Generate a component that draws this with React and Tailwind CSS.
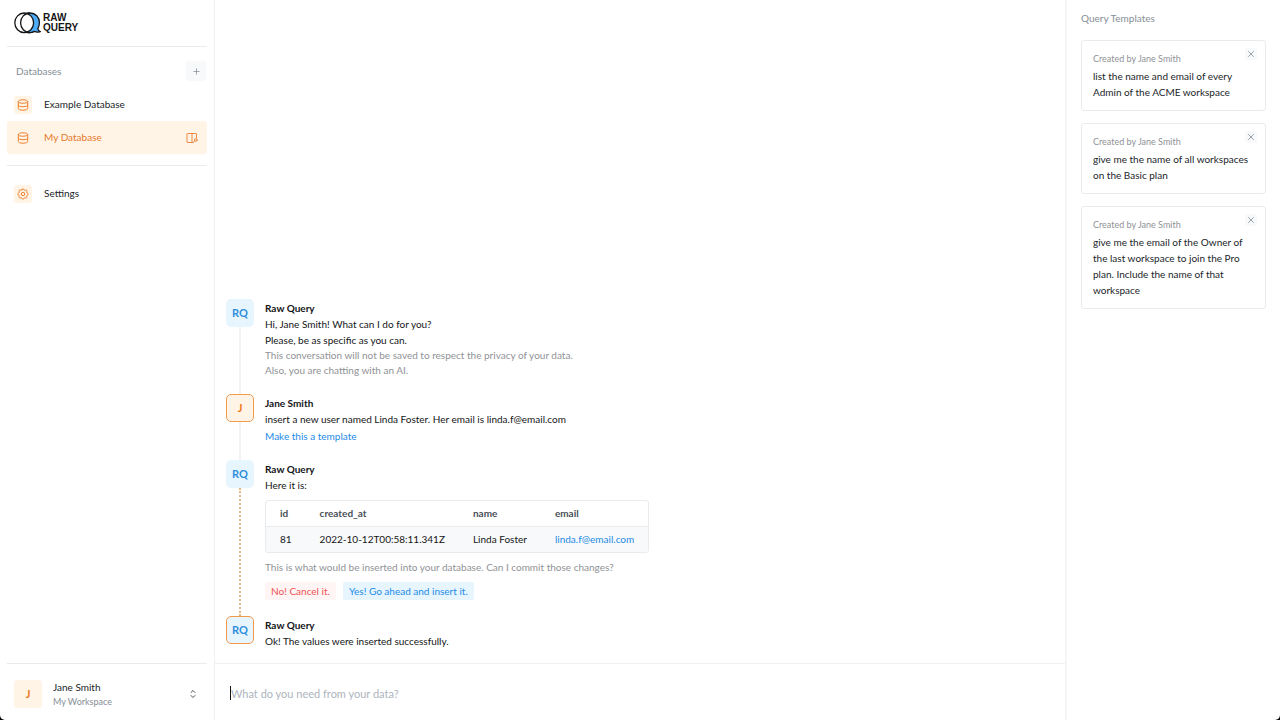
import React from "react";
import { TbDatabase, TbSettings, TbPlus, TbX, TbSelector } from "react-icons/tb";

function Logo() {
  return (
    <div className="flex items-center gap-0.5">
      <svg width="27" height="22" viewBox="0 0 27 22" fill="none" stroke="#141517" strokeWidth="1.3" aria-hidden="true">
        <path d="M16 1C21.5 1 25.4 5.2 25.4 10.6C25.4 13 24.7 15.2 23.8 16.6C24 18 24.8 19 26.2 19.6C24 20.3 22 20.2 20.4 19.4C19 20.3 17.5 20.6 16 20.6C10.6 20.6 6.6 16.2 6.6 10.8C6.6 5.4 10.6 1 16 1Z" fill="#4dabf7" />
        <ellipse cx="10.2" cy="10.8" rx="9.4" ry="9.8" fill="#ffffff" />
        <path d="M16 1C10.6 1 6.6 5.4 6.6 10.8C6.6 16.2 10.6 20.6 16 20.6" />
      </svg>
      <span className="font-['Liberation_Sans',sans-serif] text-[10px] leading-[10px] font-bold text-[#141517]">
        RAW
        <br />
        QUERY
      </span>
    </div>
  );
}

function SchemaIcon() {
  return (
    <svg width="12" height="12" viewBox="0 0 24 24" fill="none" stroke="currentColor" strokeWidth="1.7" strokeLinecap="round" strokeLinejoin="round" aria-hidden="true">
      <path d="M14 21H3a1 1 0 0 1-1-1V4a1 1 0 0 1 1-1h17a1 1 0 0 1 1 1v8M12 3v18" />
      <circle cx="19.5" cy="16" r="2.6" />
      <path d="M17.6 17.9L14.5 21" />
    </svg>
  );
}

function NavItem({ icon: Icon, label, active }) {
  return (
    <div className={active ? "flex h-[33px] items-center rounded-[3px] bg-[#fff4e6] text-[#e8792b]" : "flex h-[33px] items-center text-[#212529]"}>
      <a href="#" className="flex flex-1 items-center gap-3 pl-[7px]">
        <span className="flex size-[18px] items-center justify-center rounded-[3px] bg-[#fff4e6] text-[#ee8232]">
          <Icon size={14} strokeWidth={1.7} />
        </span>
        {label}
      </a>
      {active && (
        <button type="button" aria-label="Show schema" className="mr-[9px]">
          <SchemaIcon />
        </button>
      )}
    </div>
  );
}

function Sidebar() {
  return (
    <aside className="flex w-[215px] shrink-0 flex-col border-r border-[#eef0f2] px-[7px]">
      <div className="flex h-[46px] items-center pl-[7px]">
        <Logo />
      </div>
      <section className="border-t border-[#e9ecef] pt-[14px] pb-[11px]">
        <div className="mb-[7px] flex h-5 items-center justify-between pr-px pl-[9px] text-[#868e96]">
          <h2>Databases</h2>
          <button type="button" aria-label="Add database" className="flex size-5 items-center justify-center rounded-[3px] bg-[#f8f9fa]">
            <TbPlus size={9} />
          </button>
        </div>
        <NavItem icon={TbDatabase} label="Example Database" />
        <NavItem icon={TbDatabase} label="My Database" active />
      </section>
      <section className="border-t border-[#e9ecef] pt-[11px]">
        <NavItem icon={TbSettings} label="Settings" />
      </section>
      <button type="button" className="mt-auto flex h-[57px] items-center border-t border-[#e9ecef] pt-1 pr-2 pl-[7px] text-left">
        <span className="flex size-7 items-center justify-center rounded-[4px] bg-[#fff4e6] text-[11px] font-bold text-[#ee7a20]">J</span>
        <span className="ml-[11px] flex-1">
          <span className="block leading-[15px] text-[#212529]">Jane Smith</span>
          <span className="block text-[9px] leading-[14px] text-[#868e96]">My Workspace</span>
        </span>
        <TbSelector size={12} className="text-[#495057]" />
      </button>
    </aside>
  );
}

const avatarStyles = {
  bot: "bg-[#e7f5ff] text-[#2f8edb]",
  user: "border border-[#f2994a] bg-[#fff4e6] text-[#ee7a20]",
  current: "border border-[#f2994a] bg-[#e7f5ff] text-[#2f8edb]",
};

const lineStyles = {
  plain: "w-0 flex-1 border-l-2 border-[#f1f3f5]",
  dotted: "w-0 flex-1 border-l-2 border-dotted border-[#e3b98a]",
};

function Message({ avatar, kind, line, name, children }) {
  return (
    <li className="flex gap-[11px]">
      <div className="flex w-7 flex-col items-center">
        <span className={"flex size-7 shrink-0 items-center justify-center rounded-[5px] text-[11px] font-bold " + avatarStyles[kind]}>{avatar}</span>
        {line && <span className={lineStyles[line]} />}
      </div>
      <div className={line ? "pt-[2px] pb-4" : "pt-[2px]"}>
        <h3 className="leading-[15px] font-bold">{name}</h3>
        {children}
      </div>
    </li>
  );
}

function Chat() {
  return (
    <main className="flex min-w-0 flex-1 flex-col">
      <ol className="flex flex-1 flex-col justify-end px-[11px] pb-[14px] leading-[16px] text-[#141517]">
        <Message avatar="RQ" kind="bot" line="plain" name="Raw Query">
          <p>Hi, Jane Smith! What can I do for you?</p>
          <p>Please, be as specific as you can.</p>
          <p className="leading-[15px] text-[#909296]">This conversation will not be saved to respect the privacy of your data.</p>
          <p className="leading-[15px] text-[#909296]">Also, you are chatting with an AI.</p>
        </Message>
        <Message avatar="J" kind="user" line="plain" name="Jane Smith">
          <p>insert a new user named Linda Foster. Her email is linda.f@email.com</p>
          <button type="button" className="mt-px block text-[#228be6]">Make this a template</button>
        </Message>
        <Message avatar="RQ" kind="bot" line="dotted" name="Raw Query">
          <p>Here it is:</p>
          <div className="mt-[7px] w-fit overflow-hidden rounded-[3px] border border-[#e9ecef]">
            <table className="text-left leading-[25px]">
              <thead>
                <tr className="text-[#495057]">
                  <th className="px-[14px]">id</th>
                  <th className="px-[14px]">created_at</th>
                  <th className="px-[14px]">name</th>
                  <th className="px-[14px]">email</th>
                </tr>
              </thead>
              <tbody>
                <tr className="border-t border-[#e9ecef] bg-[#f8f9fa]">
                  <td className="px-[14px]">81</td>
                  <td className="px-[14px]">2022-10-12T00:58:11.341Z</td>
                  <td className="px-[14px]">Linda Foster</td>
                  <td className="px-[14px]">
                    <a href="mailto:linda.f@email.com" className="text-[#228be6]">linda.f@email.com</a>
                  </td>
                </tr>
              </tbody>
            </table>
          </div>
          <p className="mt-[7px] leading-[15px] text-[#909296]">This is what would be inserted into your database. Can I commit those changes?</p>
          <div className="mt-[7px] flex gap-[7px] leading-[18px]">
            <button type="button" className="rounded-[2px] bg-[#fff5f5] px-[6px] text-[#f05252]">No! Cancel it.</button>
            <button type="button" className="rounded-[2px] bg-[#e7f5ff] px-[6px] text-[#228be6]">Yes! Go ahead and insert it.</button>
          </div>
        </Message>
        <Message avatar="RQ" kind="current" name="Raw Query">
          <p>Ok! The values were inserted successfully.</p>
        </Message>
      </ol>
      <form className="flex h-[57px] items-center border-t border-[#eef0f2] px-[15px] pt-[2px]">
        <span className="h-[14px] w-px bg-[#141517]" aria-hidden="true" />
        <input
          type="text"
          aria-label="Message"
          placeholder="What do you need from your data?"
          className="h-8 min-w-0 flex-1 text-[11px] outline-none placeholder:text-[#adb5bd]"
        />
      </form>
    </main>
  );
}

const templates = [
  "list the name and email of every Admin of the ACME workspace",
  "give me the name of all workspaces on the Basic plan",
  "give me the email of the Owner of the last workspace to join the Pro plan. Include the name of that workspace",
];

function Templates() {
  return (
    <aside className="w-[215px] shrink-0 border-l-2 border-[#f4f5f7] px-[14px] pt-[10px]">
      <h2 className="leading-4 text-[#868e96]">Query Templates</h2>
      <ul className="mt-[14px] flex flex-col gap-3">
        {templates.map((text) => (
          <li key={text} className="relative rounded-[3px] border border-[#e9ecef] px-[11px] pt-[11px] pb-[10px]">
            <p className="text-[9px] leading-[14px] text-[#909296]">Created by Jane Smith</p>
            <p className="mt-[2px] leading-4 text-[#212529]">{text}</p>
            <button type="button" aria-label="Remove template" className="absolute top-[7px] right-2 flex size-3 items-center justify-center rounded-[2px] bg-[#f8f9fa] text-[#868e96]">
              <TbX size={10} />
            </button>
          </li>
        ))}
      </ul>
    </aside>
  );
}

export default function App() {
  return (
    <div className="bg-black">
      <div className="flex min-h-screen rounded-b-[5px] bg-white font-['Lato',sans-serif] text-[10px] text-[#212529]">
        <Sidebar />
        <Chat />
        <Templates />
      </div>
    </div>
  );
}
